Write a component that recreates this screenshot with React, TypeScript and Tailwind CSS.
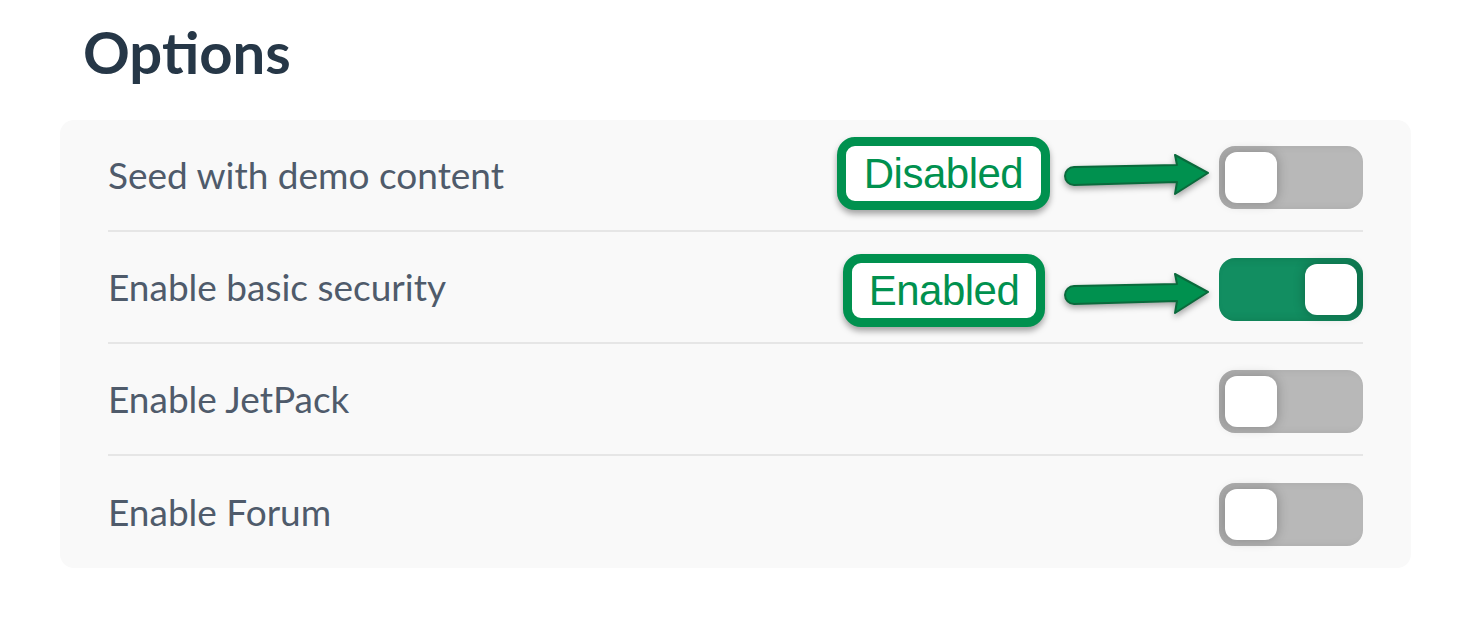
import React, { useState } from 'react';

type Option = {
  id: string;
  label: string;
  enabled: boolean;
  note?: 'Disabled' | 'Enabled';
};

const initialOptions: Option[] = [
  { id: 'seed', label: 'Seed with demo content', enabled: false, note: 'Disabled' },
  { id: 'security', label: 'Enable basic security', enabled: true, note: 'Enabled' },
  { id: 'jetpack', label: 'Enable JetPack', enabled: false },
  { id: 'forum', label: 'Enable Forum', enabled: false },
];

const Arrow: React.FC<{ className?: string }> = ({ className }) => (
  <svg
    width="154"
    height="50"
    viewBox="0 0 154 50"
    className={`drop-shadow-[0_3px_3px_rgba(0,0,0,0.35)] ${className ?? ''}`}
  >
    <path
      d="M 14 17 L 117 15 L 115 5 L 148 23 L 115 44 L 117 32 L 14 35 A 9 9 0 0 1 14 17 Z"
      fill="#00914f"
      stroke="#0a6a3c"
      strokeWidth="2"
      strokeLinejoin="round"
    />
  </svg>
);

const Toggle: React.FC<{ on: boolean; onClick: () => void }> = ({ on, onClick }) => (
  <button
    onClick={onClick}
    className={`mt-[4px] flex h-[63px] w-[144px] shrink-0 items-center rounded-[16px] p-[6px] ${
      on
        ? 'justify-end bg-[#128e61] shadow-[inset_-6px_0_8px_rgba(0,60,30,0.25)]'
        : 'justify-start bg-[#b8b8b8] shadow-[inset_6px_0_8px_rgba(0,0,0,0.08)]'
    }`}
  >
    <span className="block h-[51px] w-[52px] rounded-[12px] bg-white shadow-[0_0_12px_rgba(0,0,0,0.28)]" />
  </button>
);

export default function App() {
  const [options, setOptions] = useState(initialOptions);

  const toggle = (id: string) =>
    setOptions(prev => prev.map(o => (o.id === id ? { ...o, enabled: !o.enabled } : o)));

  return (
    <div className="min-h-[638px] w-full bg-white px-[60px] pt-[12px] font-['Lato',sans-serif]">
      <h1 className="ml-[23px] h-[108px] text-[58px] font-bold leading-[80px] text-[#263747]">Options</h1>

      <div className="w-[1351px] rounded-[14px] bg-[#f9f9f9] px-12">
        {options.map((o, i) => (
          <div
            key={o.id}
            className={`relative flex h-[112px] items-center justify-between ${
              i < options.length - 1 ? 'border-b-2 border-[#e6e6e6]' : ''
            }`}
          >
            <span className="text-[37px] text-[#4f5b6b]">{o.label}</span>

            {o.note === 'Disabled' && (
              <>
                <div className="absolute left-[729px] top-[17px] flex h-[73px] w-[213px] items-center justify-center rounded-[18px] border-[9px] border-[#00914f] bg-white shadow-[0_4px_6px_rgba(0,0,0,0.35)]">
                  <span className="font-['Liberation_Sans',Arial,sans-serif] text-[42px] leading-none tracking-[-0.5px] text-[#00914f]">
                    Disabled
                  </span>
                </div>
                <Arrow className="absolute left-[952px] top-[30px]" />
              </>
            )}

            {o.note === 'Enabled' && (
              <>
                <div className="absolute left-[735px] top-[22px] flex h-[73px] w-[202px] items-center justify-center rounded-[18px] border-[9px] border-[#00914f] bg-white shadow-[0_4px_6px_rgba(0,0,0,0.35)]">
                  <span className="font-['Liberation_Sans',Arial,sans-serif] text-[42px] leading-none tracking-[-0.5px] text-[#00914f]">
                    Enabled
                  </span>
                </div>
                <Arrow className="absolute left-[952px] top-[37px]" />
              </>
            )}

            <Toggle on={o.enabled} onClick={() => toggle(o.id)} />
          </div>
        ))}
      </div>
    </div>
  );
}
